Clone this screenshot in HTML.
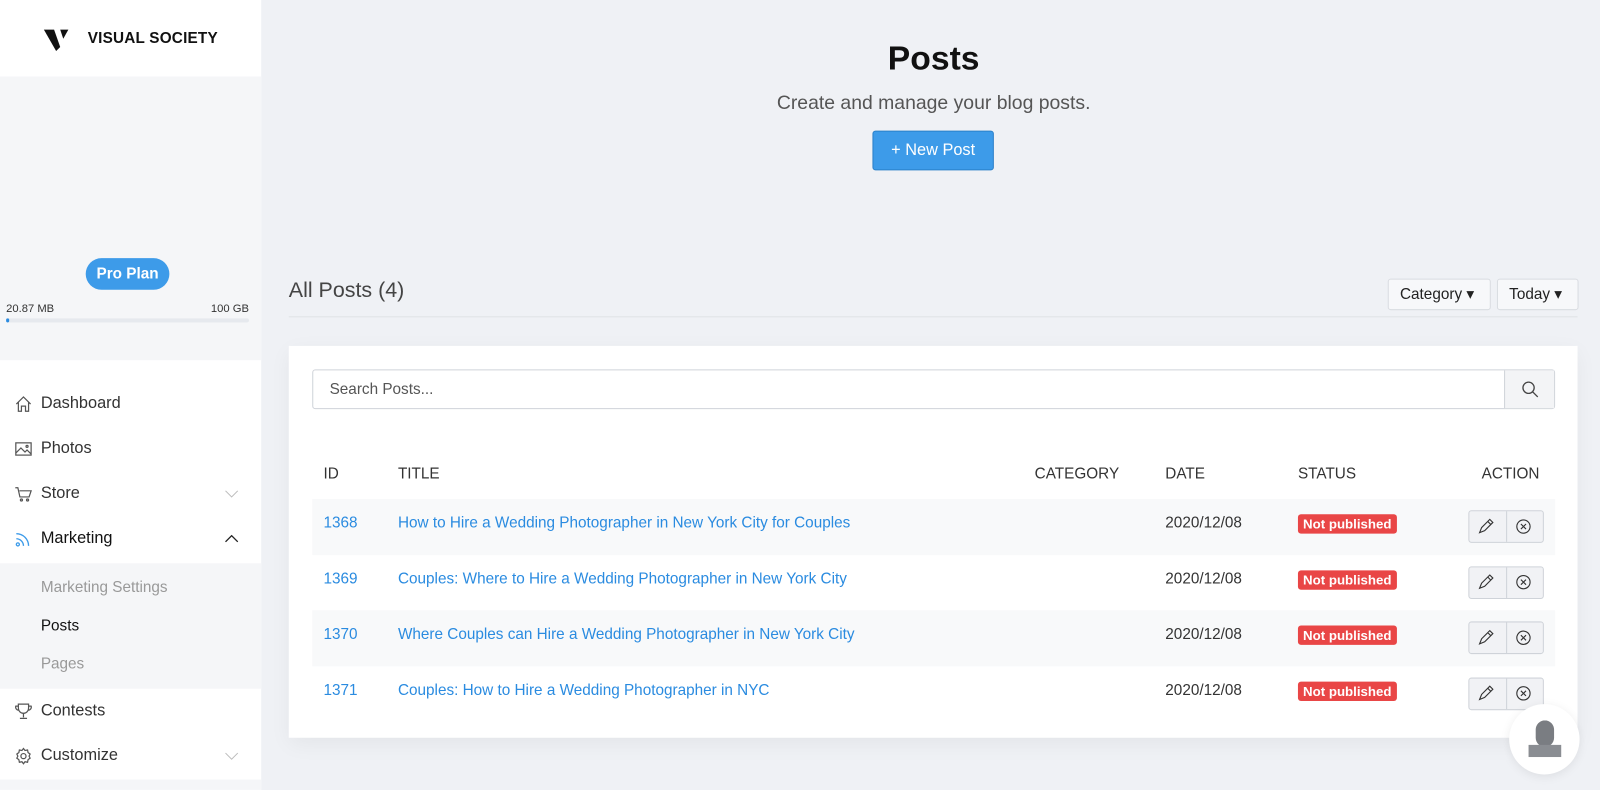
<!DOCTYPE html>
<html><head><meta charset="utf-8"><style>
*{box-sizing:border-box;margin:0;padding:0}
html,body{width:1600px;height:790px;overflow:hidden;background:#eff1f5}
body{font-family:"Liberation Sans",sans-serif;color:#333}
#w{position:absolute;left:0;top:0;width:1568px;height:774px;transform:scale(1.0204);transform-origin:0 0}
.sb{position:absolute;left:0;top:0;width:256px;height:774px;background:#fff}
.logo{height:75px;display:flex;align-items:center;padding-left:42px;font-size:15px;font-weight:bold;letter-spacing:.2px;color:#111}
.plan{position:absolute;top:75px;left:0;width:256px;height:278px;background:#f5f6f8}
.pro{position:absolute;left:84px;top:178px;width:82px;height:31px;border-radius:16px;background:#3d9be9;color:#fff;font-weight:bold;font-size:15px;text-align:center;line-height:31px}
.mb{position:absolute;top:222px;font-size:11px;color:#333}
.bar{position:absolute;left:6px;top:237px;width:238px;height:4px;border-radius:2px;background:#e6e9ee}
.bar i{display:block;width:3px;height:4px;background:#2b8be0;border-radius:2px}
.nav{position:absolute;left:0;width:256px;height:44px;display:flex;align-items:center;font-size:16px;color:#333}
.nav svg{position:absolute;left:14px}
.nav span{position:absolute;left:40px}
.nav .chev{left:220px}
.sub{position:absolute;top:552px;left:0;width:256px;height:123px;background:#f5f6f8}
.sub div{position:absolute;left:40px;font-size:15px;color:#999}
.t{position:absolute}
.btn{position:absolute;left:855px;top:128px;width:119px;height:39px;background:#3d9be9;border:1px solid #2a7fc9;border-radius:3px;color:#fff;font-size:16px;text-align:center;line-height:37px}
.dd{position:absolute;top:273px;height:31px;background:#f7f8fa;border:1px solid #d9dce1;border-radius:3px;font-size:15px;line-height:29px;padding-left:11px;color:#222}
.card{position:absolute;left:283px;top:339px;width:1263px;height:384px;background:#fff;box-shadow:0 6px 20px rgba(0,0,0,.05)}
.search{position:absolute;left:23px;top:23px;width:1218px;height:39px;border:1px solid #cfd3d9;border-radius:3px}
.search span{position:absolute;left:16px;top:10px;font-size:15px;color:#555}
.sbtn{position:absolute;right:0;top:0;width:49px;height:37px;border-left:1px solid #cfd3d9;background:#f3f4f6}
.th{position:absolute;top:117px;font-size:15px;color:#333}
.row{position:absolute;left:0;width:1218px;height:54.5px}
.row .c{position:absolute;top:15px;font-size:15px}
.a{color:#2a8be0}
.row .badge{position:absolute;left:966px;top:15px;background:#e94646;color:#fff;font-weight:bold;font-size:13px;padding:0 5px;height:19px;line-height:19px;border-radius:3px}
.row .act{position:absolute;left:1133px;top:11px;width:74px;height:32px;border:1px solid #cfd3d9;border-radius:3px;background:#f1f2f5}
.act:after{content:"";position:absolute;left:36px;top:0;width:1px;height:30px;background:#cfd3d9}
</style></head><body><div id="w">
<div class="sb">
<div class="logo"><svg width="28" height="24" viewBox="0 0 28 24" style="margin-right:16px"><path d="M1 3h10l6 17-4 4z" fill="#111"/><path d="M17 3h8l-5 9z" fill="#111"/></svg>VISUAL SOCIETY</div>
<div class="plan"><div class="pro">Pro Plan</div><div class="mb" style="left:6px">20.87 MB</div><div class="mb" style="right:12px">100 GB</div><div class="bar"><i></i></div></div>
<div class="nav" style="top:374px"><svg width="18" height="18" viewBox="0 0 18 18" fill="none" stroke="#555" stroke-width="1.2"><path d="M2 9L9 2l7 7M4 7v9h3v-5h4v5h3V7"/></svg><span>Dashboard</span></div>
<div class="nav" style="top:418px"><svg width="18" height="18" viewBox="0 0 18 18" fill="none" stroke="#555" stroke-width="1.2"><rect x="1.5" y="3" width="15" height="12"/><path d="M1.5 13l5-5 4 4 2-2 4 4"/><circle cx="12.5" cy="6.5" r="1"/></svg><span>Photos</span></div>
<div class="nav" style="top:462px"><svg width="18" height="18" viewBox="0 0 18 18" fill="none" stroke="#555" stroke-width="1.2"><path d="M1 3h2.5l2 9h9l2-6H5"/><circle cx="7" cy="15" r="1"/><circle cx="13" cy="15" r="1"/></svg><span>Store</span><svg class="chev" width="14" height="8" viewBox="0 0 14 8" fill="none" stroke="#bbb"><path d="M1 1l6 6 6-6"/></svg></div>
<div class="nav" style="top:506px;color:#111"><svg width="18" height="18" viewBox="0 0 18 18" fill="none" stroke="#3d9be9" stroke-width="1.3"><circle cx="3.5" cy="14.5" r="1.5"/><path d="M2 9a7 7 0 017 7M2 4a12 12 0 0112 12"/></svg><span>Marketing</span><svg class="chev" width="14" height="8" viewBox="0 0 14 8" fill="none" stroke="#222" stroke-width="1.3"><path d="M1 7l6-6 6 6"/></svg></div>
<div class="sub"><div style="top:15px">Marketing Settings</div><div style="top:53px;color:#111">Posts</div><div style="top:90px">Pages</div></div>
<div class="nav" style="top:675px"><svg width="18" height="18" viewBox="0 0 18 18" fill="none" stroke="#555" stroke-width="1.2"><path d="M4 2h10v4a5 5 0 01-10 0zM4 4H1.5a3 3 0 003 4M14 4h2.5a3 3 0 01-3 4M9 11v4M5.5 16h7"/></svg><span>Contests</span></div>
<div class="nav" style="top:719px"><svg width="18" height="18" viewBox="0 0 18 18" fill="none" stroke="#555" stroke-width="1.2"><circle cx="9" cy="9" r="2.5"/><path d="M9 1.5l1.5 2 2.5-.5.5 2.5 2 1.5-1 2 1 2-2 1.5-.5 2.5-2.5-.5-1.5 2-1.5-2-2.5.5-.5-2.5-2-1.5 1-2-1-2 2-1.5.5-2.5 2.5.5z"/></svg><span>Customize</span><svg class="chev" width="14" height="8" viewBox="0 0 14 8" fill="none" stroke="#bbb"><path d="M1 1l6 6 6-6"/></svg></div>
<div style="position:absolute;top:764px;left:0;width:256px;height:10px;background:#f5f6f8"></div>
</div>
<div class="t" style="left:256px;width:1318px;top:38px;text-align:center;font-size:33px;font-weight:bold;color:#111">Posts</div>
<div class="t" style="left:256px;width:1318px;top:91px;text-align:center;font-size:19px;color:#555">Create and manage your blog posts.</div>
<div class="btn">+ New Post</div>
<div class="t" style="left:283px;top:273px;font-size:21px;color:#444">All Posts (4)</div>
<div class="dd" style="left:1360px;width:101px">Category ▾</div>
<div class="dd" style="left:1467px;width:80px">Today ▾</div>
<div class="t" style="left:283px;top:310px;width:1263px;height:1px;background:#dfe2e6"></div>
<div class="card">
<div class="search"><span>Search Posts...</span><div class="sbtn"><svg style="position:absolute;left:16px;top:10px" width="17" height="17" viewBox="0 0 17 17" fill="none" stroke="#444" stroke-width="1.3"><circle cx="7" cy="7" r="5.5"/><path d="M11 11l5 5"/></svg></div></div>
<div class="th" style="left:34px">ID</div><div class="th" style="left:107px">TITLE</div><div class="th" style="left:731px">CATEGORY</div><div class="th" style="left:859px">DATE</div><div class="th" style="left:989px">STATUS</div><div class="th" style="left:1169px">ACTION</div>
</div>
<div style="position:absolute;left:306px;top:489px">
<div class="row" style="top:0;background:#f8f9fa"><div class="c a" style="left:11px">1368</div><div class="c a" style="left:84px">How to Hire a Wedding Photographer in New York City for Couples</div><div class="c" style="left:836px">2020/12/08</div><div class="badge">Not published</div><div class="act"></div></div>
<div class="row" style="top:54.5px"><div class="c a" style="left:11px">1369</div><div class="c a" style="left:84px">Couples: Where to Hire a Wedding Photographer in New York City</div><div class="c" style="left:836px">2020/12/08</div><div class="badge">Not published</div><div class="act"></div></div>
<div class="row" style="top:109px;background:#f8f9fa"><div class="c a" style="left:11px">1370</div><div class="c a" style="left:84px">Where Couples can Hire a Wedding Photographer in New York City</div><div class="c" style="left:836px">2020/12/08</div><div class="badge">Not published</div><div class="act"></div></div>
<div class="row" style="top:163.5px"><div class="c a" style="left:11px">1371</div><div class="c a" style="left:84px">Couples: How to Hire a Wedding Photographer in NYC</div><div class="c" style="left:836px">2020/12/08</div><div class="badge">Not published</div><div class="act"></div></div>
</div>
<svg style="position:absolute;left:0;top:0" width="1568" height="774" fill="none" stroke="#333" stroke-width="1.1">
<g id="ic"><path d="M1450 522l2-5 8-8 3 3-8 8zM1458 511l3 3"/><circle cx="1493" cy="516" r="6.5"/><path d="M1490.5 513.5l5 5M1495.5 513.5l-5 5"/></g>
<use href="#ic" y="54.5"/><use href="#ic" y="109"/><use href="#ic" y="163.5"/>
</svg>
<div style="position:absolute;left:1479px;top:690px;width:69px;height:69px;border-radius:50%;background:#fff;box-shadow:0 2px 10px rgba(0,0,0,.08)"><svg style="position:absolute;left:18px;top:16px" width="34" height="36" viewBox="0 0 34 36"><rect x="8" y="0" width="18" height="26" rx="9" fill="#7a7d82"/><rect x="1" y="24" width="32" height="12" fill="#8a8d92"/></svg></div>
</div></body></html>
